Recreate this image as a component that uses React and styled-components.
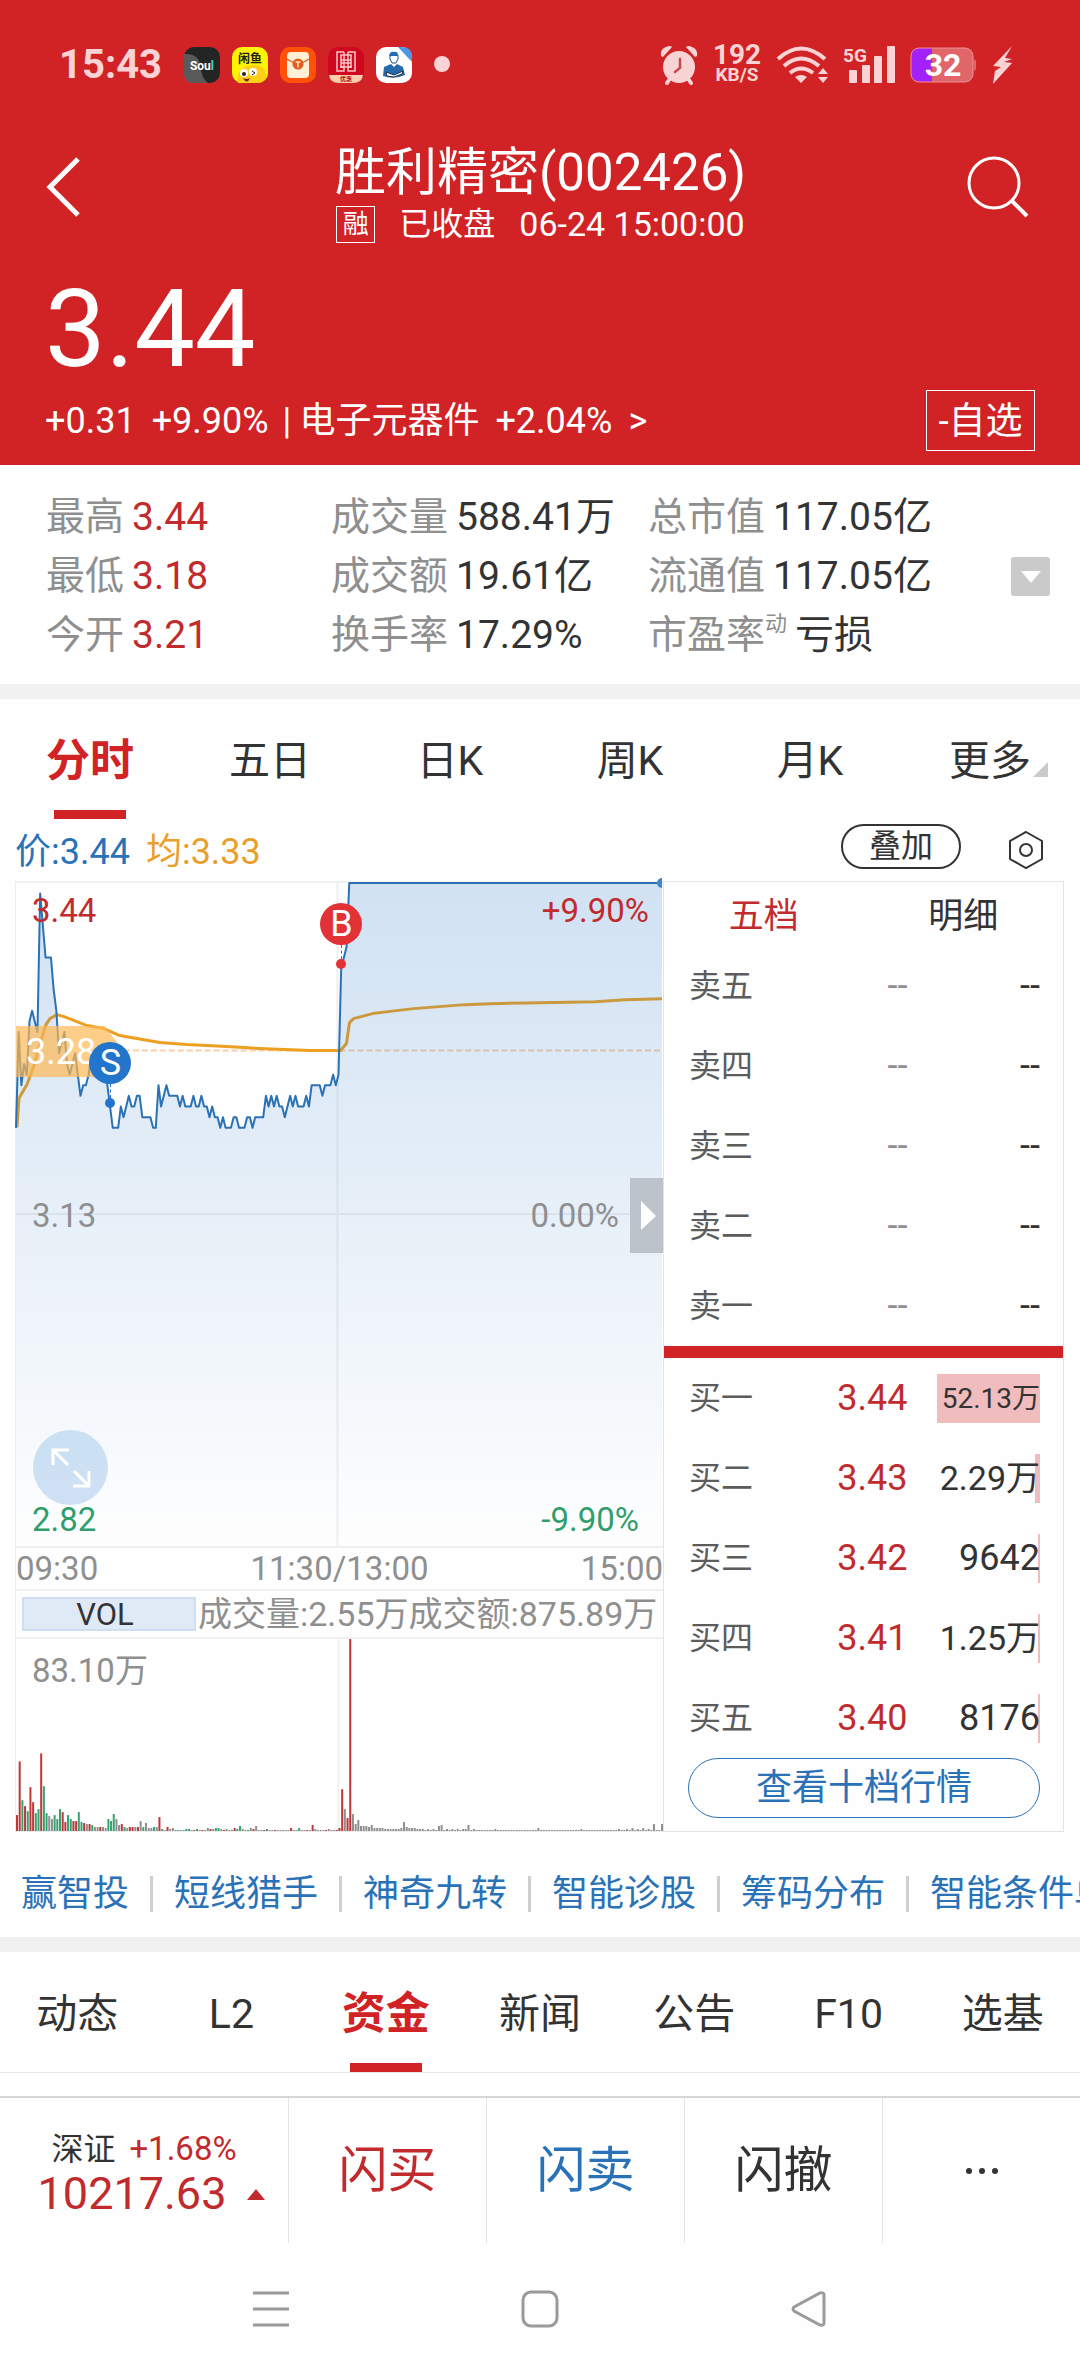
import React from "react";
import styled, { createGlobalStyle } from "styled-components";

const red = "#d12325";
const textRed = "#c12b2d";
const blue = "#2a72b8";
const green = "#2f9e6c";
const ink = "#333333";
const grey = "#8f8f8f";

const GlobalStyle = createGlobalStyle`
  * { box-sizing: border-box; }
  body {
    margin: 0;
    background: #fefefe;
    color: ${ink};
    font-family: Roboto, "Noto Sans CJK SC", sans-serif;
    font-weight: 400;
    overflow-x: hidden;
  }
  button {
    margin: 0;
    padding: 0;
    border: 0;
    background: none;
    color: inherit;
    font: inherit;
    white-space: nowrap;
    cursor: pointer;
  }
  a { color: inherit; text-decoration: none; }
  svg { display: block; flex: none; overflow: visible; }
`;

const Page = styled.div`
  min-height: 100vh;
  display: flex;
  flex-direction: column;
  overflow: hidden;
`;

/* ---------- header ---------- */

const Header = styled.header`
  background: ${red};
  color: #fff;
  padding-bottom: 14px;
`;

const StatusBar = styled.div`
  display: flex;
  align-items: center;
  justify-content: space-between;
  height: 130px;
  padding: 0 67px 0 59px;
  color: #fbd3d4;
`;

const StatusGroup = styled.div`
  display: flex;
  align-items: center;
  gap: ${(p) => p.$gap}px;
`;

const Clock = styled.span`
  font-size: 40px;
  line-height: 40px;
  font-weight: 700;
  margin-right: 10px;
`;

const Speed = styled.span`
  display: flex;
  flex-direction: column;
  align-items: center;
  width: 48px;
  font-weight: 700;
  font-size: 28px;
  line-height: 20px;
  small { font-size: 19px; line-height: 20px; }
`;

const NavRow = styled.div`
  display: grid;
  grid-template-columns: 1fr auto 1fr;
  height: 114px;
  padding: 0 51px 0 44px;
`;

const IconButton = styled.button`
  display: flex;
  align-items: center;
  justify-self: ${(p) => p.$side || "auto"};
`;

const TitleBlock = styled.div`
  display: flex;
  flex-direction: column;
  justify-content: flex-end;
  align-items: center;
  padding-left: 8px;
`;

const Title = styled.h1`
  margin: 0;
  font-size: 51px;
  line-height: 62px;
  font-weight: 400;
  white-space: nowrap;
`;

const SubTitle = styled.div`
  display: flex;
  align-items: center;
  gap: 24px;
  height: 40px;
  font-size: 34px;
  line-height: 40px;
  white-space: nowrap;
  span:nth-child(2) { font-size: 32px; }
`;

const MarginBadge = styled.span`
  width: 39px;
  height: 37px;
  border: 1px solid #fff;
  font-size: 26px;
  line-height: 35px;
  text-align: center;
`;

const Price = styled.div`
  padding: 24px 0 0 45px;
  font-size: 108px;
  line-height: 122px;
`;

const ChangeRow = styled.div`
  display: flex;
  align-items: center;
  justify-content: space-between;
  padding: 0 45px;
`;

const ChangeText = styled.a`
  display: flex;
  gap: 16px;
  font-size: 36px;
  line-height: 60px;
  white-space: nowrap;
  i { font-style: normal; margin: 0 -8px 0 -2px; }
`;

const WatchButton = styled.button`
  width: 109px;
  height: 61px;
  border: 1px solid #fff;
  font-size: 37px;
  line-height: 61px;
`;

/* ---------- key figures ---------- */

const Figures = styled.section`
  display: flex;
  align-items: center;
  padding: 23px 30px 19px 46px;
  background: #fff;
`;

const FigureGrid = styled.dl`
  flex: 1;
  display: grid;
  grid-template-columns: 285fr 317fr 363fr;
  margin: 0;
`;

const Figure = styled.div`
  display: flex;
  gap: 8px;
  height: 59px;
  font-size: 39px;
  line-height: 59px;
  white-space: nowrap;
  dt { color: ${grey}; }
  dd { margin: 0; color: ${(p) => (p.$up ? textRed : ink)}; }
  sup {
    font-size: 22px;
    line-height: 22px;
    vertical-align: 17px;
  }
`;

const MoreButton = styled.button`
  display: flex;
  align-items: center;
  justify-content: center;
  width: 39px;
  height: 39px;
  border-radius: 3px;
  background: #cacaca;
`;

const Band = styled.div`
  height: 15px;
  background: #f1f1f1;
`;

/* ---------- tabs ---------- */

const Tabs = styled.nav`
  display: grid;
  grid-auto-flow: column;
  grid-auto-columns: minmax(0, 1fr);
  background: #fefefe;
  border-bottom: ${(p) => (p.$line ? "1px solid #e8e8e8" : "0")};
`;

const Tab = styled.button`
  display: flex;
  flex-direction: column;
  align-items: center;
  height: 120px;
  padding-top: 14px;
  color: ${(p) => (p.$on ? red : ink)};
  font-size: ${(p) => (p.$on ? 44 : 41)}px;
  font-weight: ${(p) => (p.$on ? 700 : 400)};
  line-height: 97px;
  &::after {
    content: "";
    width: 72px;
    height: 9px;
    background: ${(p) => (p.$on ? red : "transparent")};
  }
`;

const TabLabel = styled.span`
  position: relative;
  svg { position: absolute; left: 100%; bottom: 33px; margin-left: 2px; }
`;

/* ---------- chart ---------- */

const InfoRow = styled.div`
  display: flex;
  align-items: center;
  height: 62px;
  padding: 0 37px 0 15px;
  gap: 16px;
  font-size: 36px;
  line-height: 54px;
`;

const Legend = styled.span`
  padding-top: 4px;
  color: ${(p) => p.$color};
  white-space: nowrap;
`;

const OverlayButton = styled.button`
  width: 120px;
  height: 45px;
  margin: 0 32px 8px auto;
  border: 2px solid ${ink};
  border-radius: 23px;
  font-size: 32px;
  line-height: 41px;
`;

const Board = styled.section`
  display: grid;
  grid-template-columns: minmax(0, 648fr) minmax(0, 401fr);
  margin: 0 16px 0 15px;
`;

const ChartColumn = styled.div`
  border: 1px solid #ececec;
  border-width: 0 0 1px 1px;
`;

const Plot = styled.div`
  position: relative;
  height: ${(p) => p.$height}px;
  border-top: 2px solid #f0f0f0;
  > svg { width: 100%; height: 100%; }
`;

const PlotLabel = styled.span`
  position: absolute;
  ${(p) => p.$side}: ${(p) => p.$inset}px;
  top: ${(p) => p.$top}px;
  color: ${(p) => p.$color};
  font-size: 33px;
  line-height: 40px;
  white-space: nowrap;
`;

const PriceTag = styled.div`
  position: absolute;
  left: 0;
  top: 143px;
  width: 108px;
  height: 51px;
  padding-left: 10px;
  background: rgba(253, 184, 84, 0.7);
  clip-path: polygon(0 0, 82% 0, 100% 50%, 82% 100%, 0 100%);
  color: #fff;
  font-size: 36px;
  line-height: 52px;
`;

const Marker = styled.div`
  position: absolute;
  left: ${(p) => p.$left}%;
  top: ${(p) => p.$top}px;
  margin-left: -21px;
  display: flex;
  flex-direction: column;
  align-items: center;
  width: 42px;
  span {
    width: 42px;
    height: 42px;
    border-radius: 50%;
    background: ${(p) => p.$color};
    color: #fff;
    font-size: 36px;
    line-height: 43px;
    text-align: center;
  }
  i {
    height: 14px;
    border-left: 1px dashed ${(p) => p.$color};
  }
  b {
    width: 10px;
    height: 10px;
    border-radius: 50%;
    background: ${(p) => p.$color};
  }
`;

const ExpandButton = styled.button`
  position: absolute;
  left: 17px;
  bottom: 41px;
  display: flex;
  align-items: center;
  justify-content: center;
  width: 75px;
  height: 75px;
  border-radius: 50%;
  background: rgba(190, 215, 240, 0.75);
`;

const CollapseButton = styled.button`
  position: absolute;
  right: 0;
  top: 295px;
  display: flex;
  align-items: center;
  justify-content: center;
  width: 33px;
  height: 75px;
  background: #bdc3cb;
`;

const TimeAxis = styled.div`
  display: flex;
  justify-content: space-between;
  height: 43px;
  border-top: 2px solid #f0f0f0;
  color: ${grey};
  font-size: 33px;
  line-height: 41px;
`;

const VolumeHead = styled.div`
  display: flex;
  align-items: center;
  height: 48px;
  padding-left: 6px;
  border-top: 2px solid #f0f0f0;
  color: ${grey};
  font-size: 34px;
  line-height: 46px;
  white-space: nowrap;
`;

const VolumeButton = styled.button`
  flex: none;
  width: 174px;
  height: 34px;
  margin-right: 2px;
  border: 2px solid #cfdff1;
  background: #e0eaf7;
  color: ${ink};
  font-size: 31px;
  line-height: 31px;
  padding-right: 8px;
`;

/* ---------- order book ---------- */

const Book = styled.div`
  border: 1px solid #e4e4e4;
  display: flex;
  flex-direction: column;
`;

const BookTabs = styled.div`
  display: grid;
  grid-template-columns: 1fr 1fr;
`;

const BookTab = styled.button`
  height: 64px;
  color: ${(p) => (p.$on ? textRed : ink)};
  font-size: 35px;
  line-height: 70px;
`;

const Quotes = styled.table`
  width: 100%;
  table-layout: fixed;
  border-collapse: collapse;
  tr { height: 80px; }
  th, td { padding: 0; font-weight: 400; line-height: 48px; white-space: nowrap; }
  th { width: 30%; padding-left: 25px; text-align: left; font-size: 32px; color: #5c5c5c; }
`;

const QuotePrice = styled.td`
  text-align: right;
  font-size: 36px;
  color: ${(p) => (p.$empty ? grey : textRed)};
`;

const QuoteSize = styled.td`
  width: 39%;
  text-align: right;
  font-size: ${(p) => p.$size}px;
  div { position: relative; height: 49px; margin-right: 23px; line-height: 49px; }
  span { position: relative; }
  i { position: absolute; right: 0; top: 0; height: 49px; background: #f0bcbe; }
`;

const BookDivider = styled.div`
  height: 12px;
  background: ${red};
`;

const DepthButton = styled.button`
  height: 60px;
  margin: 0 23px 13px 24px;
  border: 1px solid ${blue};
  border-radius: 30px;
  color: ${blue};
  font-size: 36px;
  line-height: 58px;
`;

/* ---------- bottom ---------- */

const Shortcuts = styled.nav`
  display: flex;
  align-items: center;
  height: 105px;
  padding: 18px 0 0 21px;
  color: ${blue};
  font-size: 36px;
  line-height: 36px;
  white-space: nowrap;
  a { flex: none; }
  a + a { margin-left: 21px; padding-left: 21px; border-left: 3px solid #cfcfcf; }
`;

const TradeBar = styled.footer`
  display: grid;
  grid-template-columns: 288fr 198fr 198fr 198fr 198fr;
  height: 147px;
  margin-top: 23px;
  border-top: 2px solid #d6d6d6;
`;

const TradeButton = styled.button`
  display: flex;
  align-items: center;
  justify-content: center;
  border-left: 1px solid #e4e4e4;
  color: ${(p) => p.$color || ink};
  font-size: 49px;
  line-height: 60px;
`;

const IndexCell = styled.div`
  display: flex;
  flex-direction: column;
  align-items: center;
  padding-top: 29px;
`;

const IndexName = styled.div`
  display: flex;
  gap: 14px;
  font-size: 32px;
  line-height: 44px;
  span { color: ${textRed}; font-size: 33px; }
`;

const IndexValue = styled.div`
  display: flex;
  align-items: center;
  gap: 21px;
  padding-left: 15px;
  color: ${textRed};
  font-size: 45px;
  line-height: 46px;
`;

const SystemNav = styled.nav`
  display: grid;
  grid-template-columns: 40fr 40fr 40fr;
  align-items: center;
  height: 132px;
  padding: 0 137px;
  button { display: flex; justify-content: center; }
`;

/* ---------- data ---------- */

const figures = [
  ["最高", "3.44", true], ["成交量", "588.41万"], ["总市值", "117.05亿"],
  ["最低", "3.18", true], ["成交额", "19.61亿"], ["流通值", "117.05亿"],
  ["今开", "3.21", true], ["换手率", "17.29%"], ["市盈率", "亏损", false, "动"],
];

const asks = ["卖五", "卖四", "卖三", "卖二", "卖一"];

const bids = [
  ["买一", "3.44", "52.13万", 521300],
  ["买二", "3.43", "2.29万", 22900],
  ["买三", "3.42", "9642", 9642],
  ["买四", "3.41", "1.25万", 12500],
  ["买五", "3.40", "8176", 8176],
];

// Cents above 3.00 for each minute from 09:30; the stock is limit-up after the last one.
const cents = [
  21, 30, 25, 27, 26, 31, 32, 31, 30, 43, 40, 37, 37, 37, 34, 32, 28, 29, 30, 27,
  26, 27, 28, 26, 24, 25, 25, 26, 28, 28, 28, 28, 28, 28, 25, 23, 21, 21, 21, 23,
  22, 23, 24, 23, 23, 24, 24, 22, 22, 22, 22, 21, 21, 25, 23, 24, 25, 24, 24, 24,
  24, 23, 24, 23, 23, 23, 24, 23, 23, 24, 23, 23, 22, 23, 22, 22, 21, 22, 21, 21,
  21, 22, 22, 21, 21, 21, 22, 22, 21, 22, 22, 22, 22, 24, 23, 24, 23, 24, 23, 23,
  22, 23, 24, 23, 24, 23, 23, 23, 24, 23, 25, 25, 25, 25, 24, 25, 25, 25, 26, 25,
  26, 36, 37, 38, 44,
];

const minuteX = (m) => (m * 646) / 240;
const priceY = (c) => 331 - (c - 13) * 10.68;
const pricePath =
  cents.map((c, m) => `${m ? "L" : "M"}${minuteX(m).toFixed(1)} ${priceY(c).toFixed(1)}`).join("") +
  `L647 ${priceY(44).toFixed(1)}`;

const averagePath =
  "M1 245L3 216L11 202L18 183L22 169L26 155L30 142L34 136L41 132L48 134L56 137L71 143L88 146L104 153L121 156L144 160L171 162L211 164L244 166L294 168L325 168L331 161L334 140L338 136L357 131L381 128L398 126L450 122L475 121L525 120L580 119L610 117L647 116";

// Volume bars: height and tone (r up, g down, x flat) per minute.
const openingBars =
  "16r 70r 31g 25r 20g 44r 29r 18g 22g 78r 45g 18g 15x 12x 16g 12g 22g 19r 9r 16g 12g 10r 10r 19g 9g 8r 7x 7r 6g 4x 4x 4r 4x 3x 12g 10g 17g 12x 6x 7r 4g 3x 4r 4r 4x 4r 10x 4g 8x 3x 3x 4g 4x 14r 2g 1x 4r 2x 3x 1x 1g 1x 1x 2g 2g 1x 1r 2g 1x 1r 1x 3x 2r 2x 3g 3g 2x 1r 2x 1x 1x 3r 2g 5g 2x 1x 1g 3x 2r 5x 1x 1x 1r 2g 1x 1x 1r 1x 1x 1x 1x 1x 3r 1x 1x 3g 1x 1x 1r 1x 6r 2x 1x 1x 1x 1r 2x 1x 1x 1r 3r 42r 22x 13r 193r 17x 7x 11x 5x 5x 5x 4x 6x 3x 3x 3x 3x 2x 2x 2x 2x 2x 2x 3x 9x 4x 3x 3x 3x 2x 2x 2x 1x 2x 1x 2x 1x 5x 6x 1x 2x 1x 2x 1x 2x 1x 2x 2x 6x 1x 2x"
    .split(" ");
const lateBars = { 178: 2, 194: 3, 210: 2, 224: 2, 227: 2, 229: 3, 231: 2, 233: 3, 235: 2, 237: 7, 240: 7 };
const tones = { r: "#bf3538", g: "#37a170", x: "#8f8f8f" };
const bars = Array.from({ length: 241 }, (_, m) => {
  const item = openingBars[m];
  return item
    ? { h: parseInt(item, 10), fill: tones[item.slice(-1)] }
    : { h: lateBars[m] || 1, fill: tones.x };
});

const shortcuts = ["赢智投", "短线猎手", "神奇九转", "智能诊股", "筹码分布", "智能条件单"];

/* ---------- drawings ---------- */

const AppIcons = () => (
  <>
    <svg width="36" height="36" viewBox="0 0 36 36">
      <rect width="36" height="36" rx="10" fill="#232525" />
      <path d="M0 7C10 6 18 12 15 20C18 22 17 31 24 36H8C2 36 0 30 0 26Z" fill="#666" opacity=".8" />
      <text x="18" y="23" fontSize="12" fontWeight="700" fontFamily="Roboto" fill="#fff" textAnchor="middle">Sou<tspan fill="#35d5c8">l</tspan></text>
    </svg>
    <svg width="36" height="36" viewBox="0 0 36 36">
      <rect width="36" height="36" rx="10" fill="#fdf304" />
      <path d="M6 36C4 30 8 19 17 19C24 15 36 20 34 31Q30 36 26 36Z" fill="#ffcf1a" />
      <circle cx="12" cy="26" r="4" fill="#fff" /><circle cx="21" cy="25" r="4" fill="#fff" />
      <circle cx="12" cy="27" r="2" fill="#222" /><path d="M20 24L23 26L20 28" stroke="#222" strokeWidth="1" fill="none" />
      <path d="M11 31Q15 33 18 31Q15 38 11 31Z" fill="#7b1515" />
      <text x="6" y="16" fontSize="12" fontWeight="700" fontFamily="Noto Sans CJK SC" fill="#222">闲鱼</text>
    </svg>
    <svg width="36" height="36" viewBox="0 0 36 36">
      <rect width="36" height="36" rx="10" fill="#ff5208" />
      <rect x="7" y="5" width="22" height="26" rx="4" fill="#fff0d6" />
      <path d="M7 12Q18 20 29 12" fill="none" stroke="#e45a1c" strokeWidth="1.5" />
      <circle cx="18" cy="17" r="5.5" fill="#e8581c" />
      <path d="M15.5 15H20.500M18 15V20.500" stroke="#ffe7c4" strokeWidth="1.5" />
    </svg>
    <svg width="36" height="36" viewBox="0 0 36 36">
      <rect width="36" height="36" rx="10" fill="#cf0820" />
      <g fill="none" stroke="#f6c5c5" strokeWidth="1.5">
        <path d="M16 5H9V24H16V20H12M20 5H27V24H20V20H24" />
        <path d="M13 8H23V13H13ZM13 16H23V20H13ZM16 5V20M20 5V20M13 13V16M23 13V16" />
      </g>
      <path d="M1 28H35Q34 36 25 36H11Q2 36 1 28Z" fill="#f9cfae" />
      <text x="12" y="34" fontSize="6" fontWeight="700" fontFamily="Noto Sans CJK SC" fill="#b0101f">优惠</text>
    </svg>
    <svg width="36" height="36" viewBox="0 0 36 36">
      <rect width="36" height="36" rx="10" fill="#fff" />
      <path d="M22 0H26Q36 0 36 10V15Z" fill="#4a97e4" />
      <path d="M14 8Q18 3 22 8V12L20 16H16L14 12Z" fill="#fff" stroke="#214f80" strokeWidth="1" />
      <path d="M13 9Q14 4 18 5Q22 4 22 9Z" fill="#246bb5" />
      <path d="M15 17L8 20L7 29Q18 33 29 28L27 20L21 17L18 20Z" fill="#2869ac" />
      <path d="M10 25L18 28L27 24L26 27L18 30L11 29Z" fill="#fff" stroke="#1d3550" strokeWidth="1" />
    </svg>
    <svg width="36" height="36" viewBox="0 0 36 36"><circle cx="18" cy="17" r="8" fill="#fbd3d4" /></svg>
  </>
);

const AlarmIcon = () => (
  <svg width="38" height="40" viewBox="0 0 38 40">
    <circle cx="19" cy="22" r="16" fill="#f8d3d4" />
    <path d="M1 11Q0 4 6 2Q10 0 12 2L3 12ZM37 11Q38 4 32 2Q28 0 26 2L35 12Z" fill="#f8d3d4" />
    <path d="M9 35L7 38M29 35L31 38" stroke="#f8d3d4" strokeWidth="4" strokeLinecap="round" />
    <path d="M20 14V23L15 27" fill="none" stroke="#c6494c" strokeWidth="2.500" strokeLinecap="round" />
  </svg>
);

const WifiIcon = () => (
  <svg width="52" height="38" viewBox="0 0 52 38">
    <g fill="none" stroke="#fbd3d4" strokeWidth="4">
      <path d="M2 13Q25 -8 49 13" /><path d="M8 20Q25 5 43 20" /><path d="M14 27Q25 18 37 27" />
    </g>
    <path d="M19 31Q25 27 31 31L25 37Z" fill="#fbd3d4" />
    <path d="M42 28L47 22L52 28ZM42 31L47 37L52 31Z" fill="#fbd3d4" />
  </svg>
);

const SignalIcon = () => (
  <svg width="52" height="38" viewBox="0 0 52 38">
    <text x="0" y="16" fontSize="19" fontWeight="700" fontFamily="Roboto" fill="#fbd3d4">5G</text>
    <g fill="#fbd3d4">
      <rect x="6" y="24" width="8" height="13" rx="1" /><rect x="19" y="19" width="8" height="18" rx="1" />
      <rect x="31" y="10" width="8" height="27" rx="1" /><rect x="44" y="0" width="8" height="37" rx="1" />
    </g>
  </svg>
);

const BatteryIcon = () => (
  <svg width="67" height="36" viewBox="0 0 67 36">
    <clipPath id="cell"><rect x="1" y="1" width="62" height="34" rx="8" /></clipPath>
    <g clipPath="url(#cell)">
      <rect width="64" height="36" fill="#e0666a" /><rect width="22" height="36" fill="#a322fb" />
    </g>
    <rect x="1" y="1" width="62" height="34" rx="8" fill="none" stroke="#ee8f92" strokeWidth="1" />
    <path d="M63 12Q66 12 66 15V21Q66 24 63 24Z" fill="#e0666a" />
    <text x="33" y="29" fontSize="32" fontWeight="700" fontFamily="Roboto" fill="#fff" textAnchor="middle">32</text>
  </svg>
);

const BoltIcon = () => (
  <svg width="21" height="38" viewBox="0 0 21 38">
    <path d="M20 0L1 20L9 21L3 25L1 38L20 17L12 16L20 13L13 12Z" fill="#fbd3d4" />
  </svg>
);

/* ---------- page ---------- */

function PriceChart() {
  return (
    <Plot $height={665}>
      <svg viewBox="0 0 648 665" preserveAspectRatio="none" aria-label="分时走势">
        <defs>
          <linearGradient id="area" x1="0" y1="0" x2="0" y2="665" gradientUnits="userSpaceOnUse">
            <stop offset="0" stopColor="#2f7dcb" stopOpacity=".22" />
            <stop offset="1" stopColor="#2f7dcb" stopOpacity="0" />
          </linearGradient>
        </defs>
        <path d="M0 332H648M322 0V665" stroke="#eeeff0" strokeWidth="2" />
        <path d="M90 168H648" stroke="#f6cfac" strokeWidth="2" strokeDasharray="6 3" />
        <path d={averagePath} fill="none" stroke="#eda01f" strokeWidth="3" strokeLinejoin="round" />
        <path d={`${pricePath}V665H0Z`} fill="url(#area)" />
        <path d={pricePath} fill="none" stroke="#2a72b5" strokeWidth="2" strokeLinejoin="round" />
        <path d="M647 -5A5 5 0 0 0 647 5Z" fill="#3f86cc" />
      </svg>
      <PlotLabel $side="left" $inset={16} $top={8} $color={textRed}>3.44</PlotLabel>
      <PlotLabel $side="right" $inset={14} $top={8} $color={textRed}>+9.90%</PlotLabel>
      <PlotLabel $side="left" $inset={16} $top={313} $color={grey}>3.13</PlotLabel>
      <PlotLabel $side="right" $inset={44} $top={313} $color={grey}>0.00%</PlotLabel>
      <PlotLabel $side="left" $inset={16} $top={617} $color={green}>2.82</PlotLabel>
      <PlotLabel $side="right" $inset={24} $top={617} $color={green}>-9.90%</PlotLabel>
      <PriceTag>3.28</PriceTag>
      <Marker $left={14.6} $top={159} $color="#2374cb"><span>S</span><i /><b /></Marker>
      <Marker $left={50.3} $top={20} $color="#e33236"><span>B</span><i /><b /></Marker>
      <ExpandButton aria-label="放大">
        <svg width="40" height="40" viewBox="0 0 40 40" fill="none" stroke="#fff" strokeWidth="3">
          <path d="M2 17V2H18M2 2L17 17M38 23V38H22M38 38L23 23" />
        </svg>
      </ExpandButton>
      <CollapseButton aria-label="收起五档">
        <svg width="18" height="30" viewBox="0 0 18 30"><path d="M3 0V29L18 15Z" fill="#fff" /></svg>
      </CollapseButton>
    </Plot>
  );
}

function VolumeChart() {
  return (
    <Plot $height={194}>
      <svg viewBox="0 0 648 193" preserveAspectRatio="none" aria-label="成交量">
        <path d="M323 0V193" stroke="#f0f0f0" strokeWidth="2" />
        {bars.map((bar, m) => (
          <rect key={m} x={minuteX(m)} y={193 - bar.h} width="2" height={bar.h} fill={bar.fill} />
        ))}
      </svg>
      <PlotLabel $side="left" $inset={16} $top={12} $color={grey}>83.10万</PlotLabel>
    </Plot>
  );
}

function OrderBook() {
  return (
    <Book>
      <BookTabs>
        <BookTab $on>五档</BookTab>
        <BookTab>明细</BookTab>
      </BookTabs>
      <Quotes aria-label="卖盘">
        <tbody>
          {asks.map((name) => (
            <tr key={name}>
              <th scope="row">{name}</th>
              <QuotePrice $empty>--</QuotePrice>
              <QuoteSize $size={36}><div><span>--</span></div></QuoteSize>
            </tr>
          ))}
        </tbody>
      </Quotes>
      <BookDivider />
      <Quotes aria-label="买盘">
        <tbody>
          {bids.map(([name, price, size, amount]) => (
            <tr key={name}>
              <th scope="row">{name}</th>
              <QuotePrice>{price}</QuotePrice>
              <QuoteSize $size={size.length > 5 ? 28 : size.length > 4 ? 34 : 36}>
                <div>
                  <i style={{ width: Math.max(2, Math.round((amount / 521300) * 103)) }} />
                  <span>{size}</span>
                </div>
              </QuoteSize>
            </tr>
          ))}
        </tbody>
      </Quotes>
      <DepthButton>查看十档行情</DepthButton>
    </Book>
  );
}

export default function App() {
  return (
    <Page>
      <GlobalStyle />
      <Header>
        <StatusBar>
          <StatusGroup $gap={12}>
            <Clock>15:43</Clock>
            <AppIcons />
          </StatusGroup>
          <StatusGroup $gap={15}>
            <AlarmIcon />
            <Speed>192<small>KB/S</small></Speed>
            <WifiIcon />
            <SignalIcon />
            <BatteryIcon />
            <BoltIcon />
          </StatusGroup>
        </StatusBar>
        <NavRow>
          <IconButton $side="start" aria-label="返回">
            <svg width="38" height="60" viewBox="0 0 38 60" fill="none" stroke="#fff" strokeWidth="5">
              <path d="M34 2L6 30L34 58" />
            </svg>
          </IconButton>
          <TitleBlock>
            <Title>胜利精密(002426)</Title>
            <SubTitle>
              <MarginBadge>融</MarginBadge>
              <span>已收盘</span>
              <span>06-24 15:00:00</span>
            </SubTitle>
          </TitleBlock>
          <IconButton $side="end" aria-label="搜索">
            <svg width="62" height="62" viewBox="0 0 62 62" fill="none" stroke="#fff" strokeWidth="3">
              <circle cx="27" cy="27" r="25" /><path d="M45 45L60 60" strokeWidth="4" />
            </svg>
          </IconButton>
        </NavRow>
        <Price>3.44</Price>
        <ChangeRow>
          <ChangeText href="#sector">
            <span>+0.31</span>
            <span>+9.90%</span>
            <i>|</i>
            <span>电子元器件</span>
            <span>+2.04%</span>
            <span>&gt;</span>
          </ChangeText>
          <WatchButton>-自选</WatchButton>
        </ChangeRow>
      </Header>

      <Figures>
        <FigureGrid>
          {figures.map(([name, value, up, note]) => (
            <Figure key={name} $up={up}>
              <dt>{name}{note && <sup>{note}</sup>}</dt>
              <dd>{value}</dd>
            </Figure>
          ))}
        </FigureGrid>
        <MoreButton aria-label="展开">
          <svg width="20" height="12" viewBox="0 0 20 12"><path d="M0 0H20L10 12Z" fill="#fff" /></svg>
        </MoreButton>
      </Figures>
      <Band />

      <Tabs>
        {["分时", "五日", "日K", "周K", "月K"].map((name, i) => (
          <Tab key={name} $on={i === 0}><TabLabel>{name}</TabLabel></Tab>
        ))}
        <Tab>
          <TabLabel>
            更多
            <svg width="15" height="15" viewBox="0 0 15 15"><path d="M15 0V15H0Z" fill="#cacaca" /></svg>
          </TabLabel>
        </Tab>
      </Tabs>

      <InfoRow>
        <Legend $color={blue}>价:3.44</Legend>
        <Legend $color="#ea9f2b">均:3.33</Legend>
        <OverlayButton>叠加</OverlayButton>
        <IconButton aria-label="设置">
          <svg width="34" height="38" viewBox="0 0 34 38" fill="none" stroke={ink} strokeWidth="2">
            <path d="M17 1L33 10V28L17 37L1 28V10Z" /><circle cx="17" cy="19" r="6" />
          </svg>
        </IconButton>
      </InfoRow>

      <Board>
        <ChartColumn>
          <PriceChart />
          <TimeAxis><span>09:30</span><span>11:30/13:00</span><span>15:00</span></TimeAxis>
          <VolumeHead>
            <VolumeButton>VOL</VolumeButton>
            <span>成交量:2.55万</span>
            <span>成交额:875.89万</span>
          </VolumeHead>
          <VolumeChart />
        </ChartColumn>
        <OrderBook />
      </Board>

      <Shortcuts>
        {shortcuts.map((name) => <a key={name} href="#tools">{name}</a>)}
      </Shortcuts>
      <Band />

      <Tabs $line>
        {["动态", "L2", "资金", "新闻", "公告", "F10", "选基"].map((name, i) => (
          <Tab key={name} $on={i === 2}><TabLabel>{name}</TabLabel></Tab>
        ))}
      </Tabs>

      <TradeBar>
        <IndexCell>
          <IndexName>深证<span>+1.68%</span></IndexName>
          <IndexValue>
            10217.63
            <svg width="18" height="11" viewBox="0 0 18 11"><path d="M9 0L18 11H0Z" fill={textRed} /></svg>
          </IndexValue>
        </IndexCell>
        <TradeButton $color={textRed}>闪买</TradeButton>
        <TradeButton $color={blue}>闪卖</TradeButton>
        <TradeButton>闪撤</TradeButton>
        <TradeButton aria-label="更多操作">
          <svg width="34" height="8" viewBox="0 0 34 8" fill={ink}>
            <circle cx="4" cy="4" r="3" /><circle cx="17" cy="4" r="3" /><circle cx="30" cy="4" r="3" />
          </svg>
        </TradeButton>
      </TradeBar>

      <SystemNav>
        <button aria-label="最近任务">
          <svg width="36" height="38" viewBox="0 0 36 38" stroke="#9a9a9a" strokeWidth="3">
            <path d="M0 3H36M0 19H36M0 35H36" />
          </svg>
        </button>
        <button aria-label="主页">
          <svg width="38" height="38" viewBox="0 0 38 38" fill="none" stroke="#9a9a9a" strokeWidth="3">
            <rect x="2" y="2" width="34" height="34" rx="8" />
          </svg>
        </button>
        <button aria-label="返回">
          <svg width="36" height="38" viewBox="0 0 36 38" fill="none" stroke="#9a9a9a" strokeWidth="3">
            <path d="M3 17L29 3Q33 2 33 5V33Q33 36 29 35L3 21Q1 19 3 17Z" />
          </svg>
        </button>
      </SystemNav>
    </Page>
  );
}
